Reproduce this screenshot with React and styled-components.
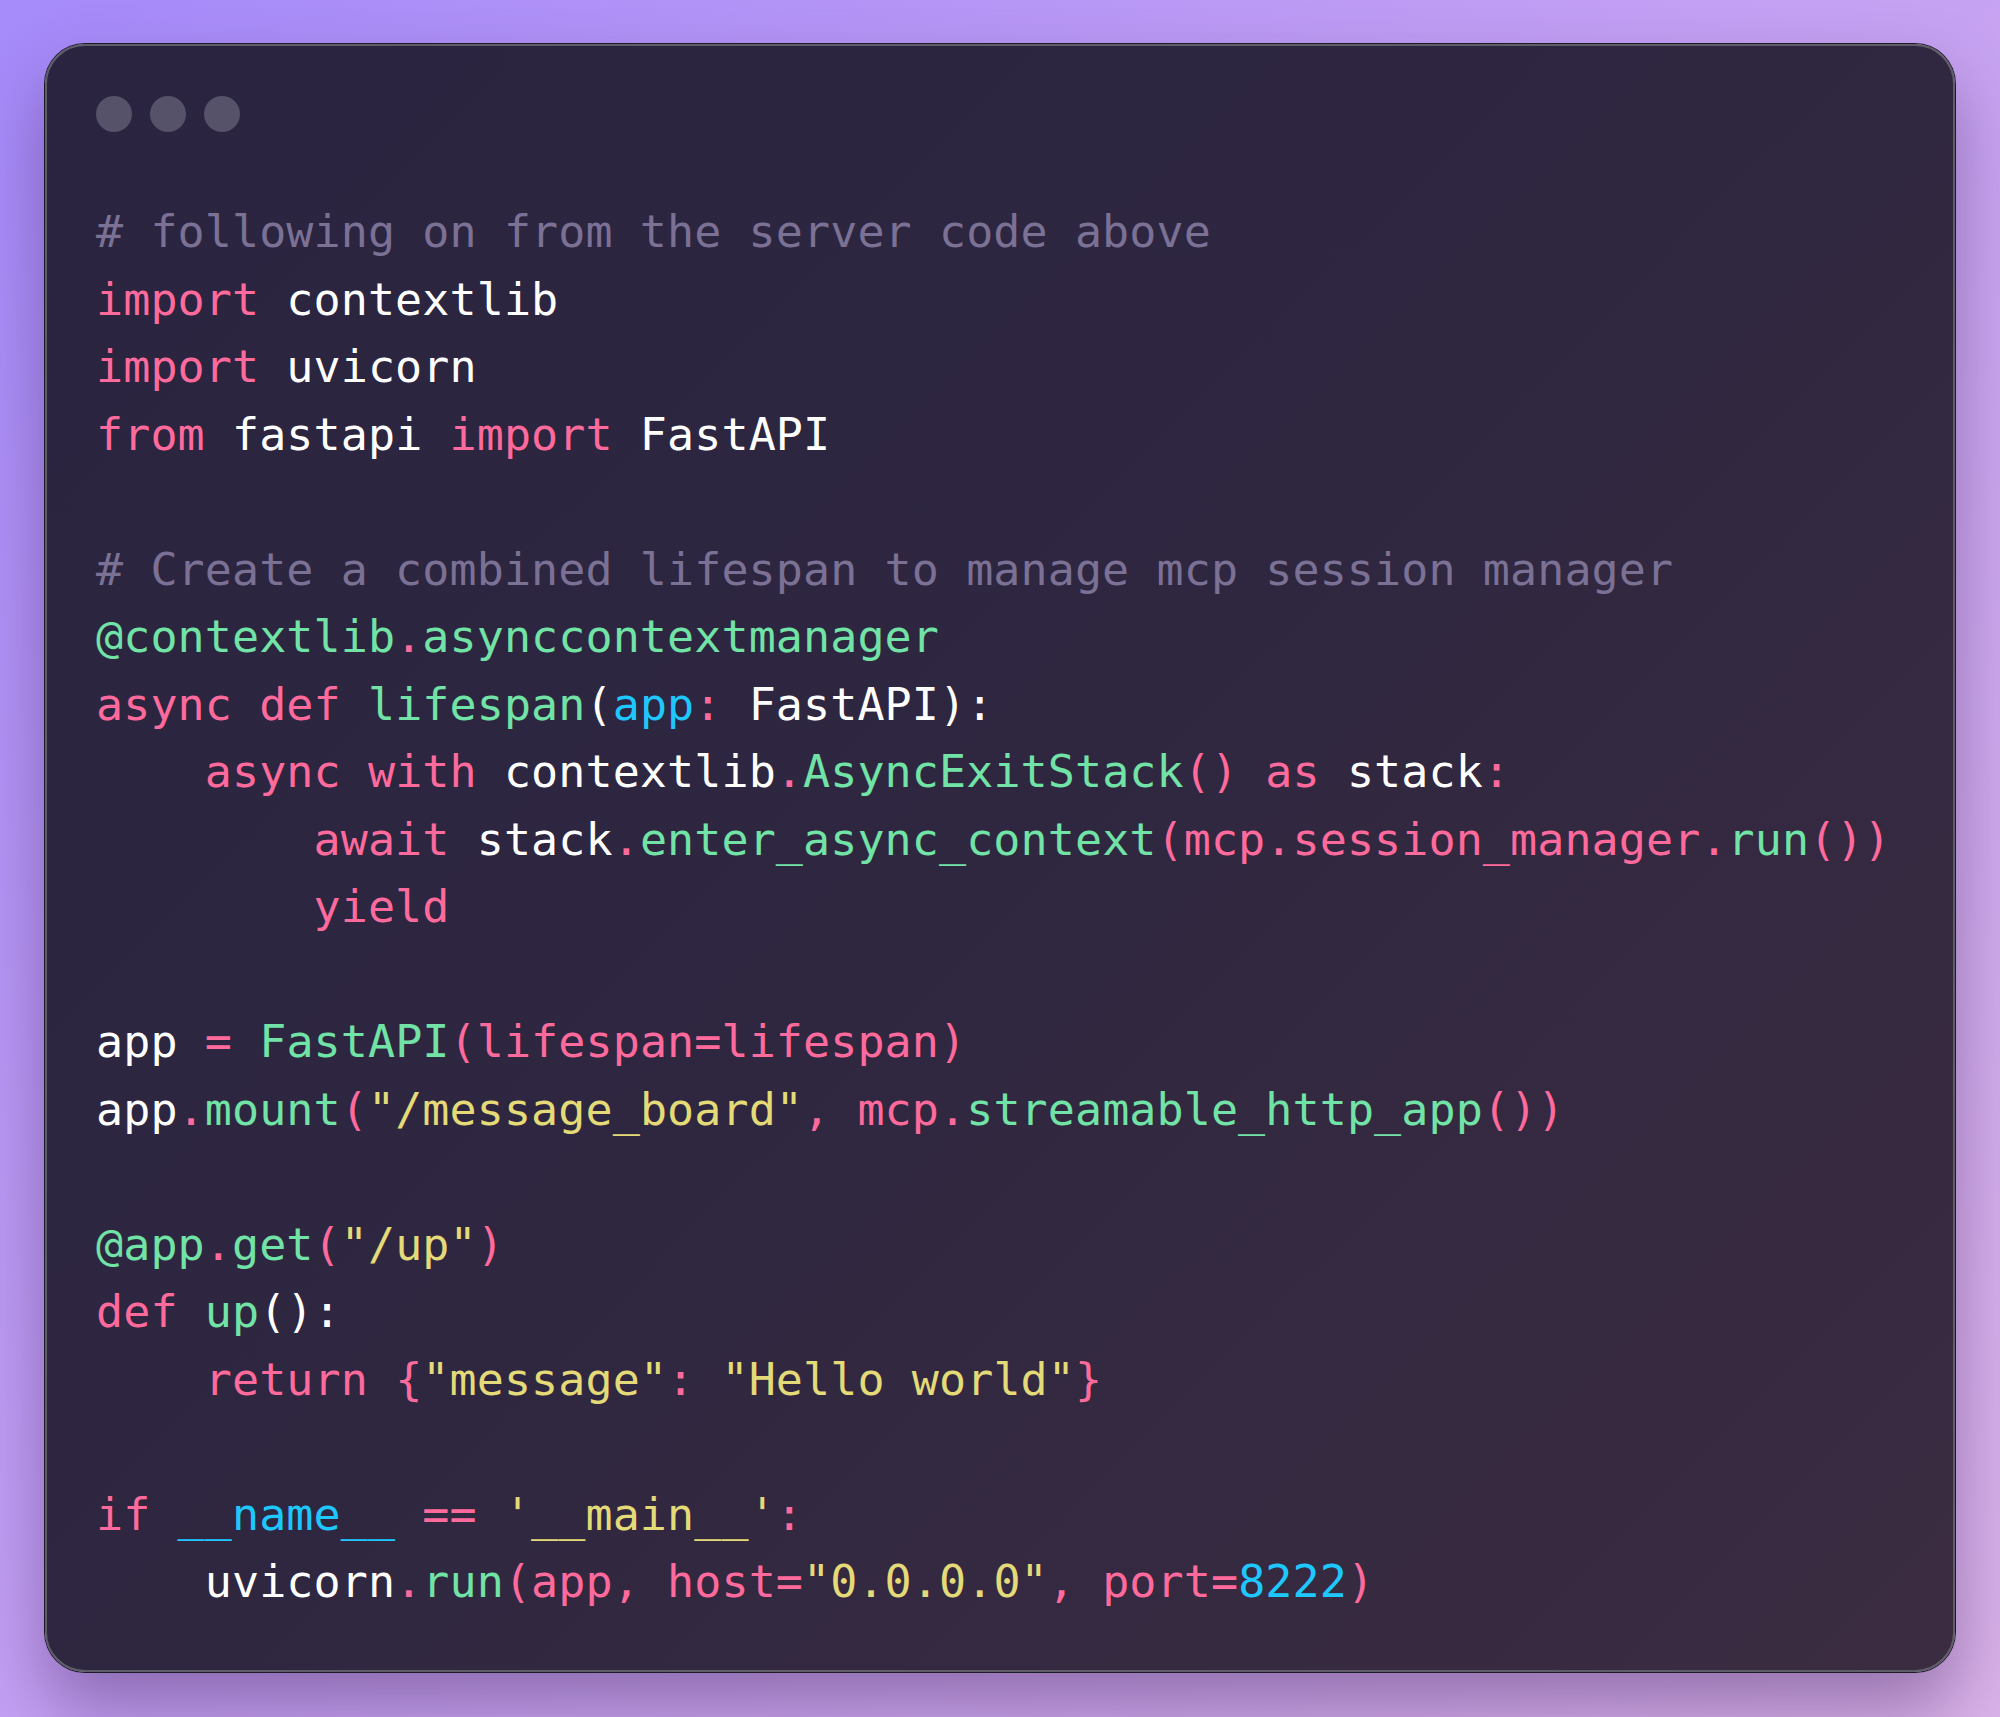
import React from 'react';
import styled, { createGlobalStyle } from 'styled-components';

const COLORS = {
  c: '#7b7195',
  k: '#ff6a9c',
  t: '#ffffff',
  f: '#72e3a6',
  v: '#1ec8ff',
  s: '#e4da78',
};

const LINES = [
  [['c', '# following on from the server code above']],
  [['k', 'import'], ['t', ' contextlib']],
  [['k', 'import'], ['t', ' uvicorn']],
  [['k', 'from'], ['t', ' fastapi '], ['k', 'import'], ['t', ' FastAPI']],
  [],
  [['c', '# Create a combined lifespan to manage mcp session manager']],
  [['f', '@contextlib'], ['k', '.'], ['f', 'asynccontextmanager']],
  [['k', 'async def '], ['f', 'lifespan'], ['t', '('], ['v', 'app'], ['k', ':'], ['t', ' FastAPI):']],
  [['t', '    '], ['k', 'async with '], ['t', 'contextlib'], ['k', '.'], ['f', 'AsyncExitStack'], ['k', '() as '], ['t', 'stack'], ['k', ':']],
  [['t', '        '], ['k', 'await '], ['t', 'stack'], ['k', '.'], ['f', 'enter_async_context'], ['k', '(mcp.session_manager.'], ['f', 'run'], ['k', '())']],
  [['t', '        '], ['k', 'yield']],
  [],
  [['t', 'app '], ['k', '='], ['t', ' '], ['f', 'FastAPI'], ['k', '(lifespan=lifespan)']],
  [['t', 'app'], ['k', '.'], ['f', 'mount'], ['k', '('], ['s', '"/message_board"'], ['k', ', mcp.'], ['f', 'streamable_http_app'], ['k', '())']],
  [],
  [['f', '@app'], ['k', '.'], ['f', 'get'], ['k', '('], ['s', '"/up"'], ['k', ')']],
  [['k', 'def '], ['f', 'up'], ['t', '():']],
  [['t', '    '], ['k', 'return '], ['k', '{'], ['s', '"message"'], ['k', ': '], ['s', '"Hello world"'], ['k', '}']],
  [],
  [['k', 'if '], ['v', '__name__'], ['k', ' == '], ['s', "'__main__'"], ['k', ':']],
  [['t', '    uvicorn'], ['k', '.'], ['f', 'run'], ['k', '(app, host='], ['s', '"0.0.0.0"'], ['k', ', port='], ['v', '8222'], ['k', ')']],
];

const App = () => {
  return (
    <>
      <GlobalStyle />
      <Page>
        <Window>
          <TitleBar>
            <Dot />
            <Dot />
            <Dot />
          </TitleBar>
          <Code>
            {LINES.map((line, i) => (
              <Line key={i}>
                {line.length === 0
                  ? ' '
                  : line.map(([kind, text], j) => (
                      <Token key={j} $kind={kind}>
                        {text}
                      </Token>
                    ))}
              </Line>
            ))}
          </Code>
        </Window>
      </Page>
    </>
  );
};

const GlobalStyle = createGlobalStyle`
  html, body {
    margin: 0;
    padding: 0;
  }
  body {
    background: #b89af2;
  }
`;

const Page = styled.div`
  min-height: 1717px;
  box-sizing: border-box;
  padding: 44px 45px;
  background: linear-gradient(135deg, #a58afa 0%, #c3a0f4 45%, #dab3e9 100%);
`;

const Window = styled.div`
  box-sizing: border-box;
  border-radius: 40px;
  border: 2px solid #5f5d68;
  box-shadow: 0 0 0 1px #1e1a28, 0 36px 70px rgba(70, 40, 100, 0.45);
  background: linear-gradient(135deg, #2a2440 0%, #2f2740 50%, #3b2c41 100%);
  padding: 50px 49px 54px;
`;

const TitleBar = styled.div`
  display: flex;
  gap: 18px;
`;

const Dot = styled.span`
  width: 36px;
  height: 36px;
  border-radius: 50%;
  background: #56526a;
`;

const Code = styled.pre`
  margin: 66px 0 0;
  font-family: 'DejaVu Sans Mono', 'Liberation Mono', monospace;
  font-size: 45px;
  letter-spacing: 0.1px;
  line-height: 67.5px;
  color: #ffffff;
`;

const Line = styled.div`
  white-space: pre;
`;

const Token = styled.span`
  color: ${(p) => COLORS[p.$kind]};
`;

export default App;
